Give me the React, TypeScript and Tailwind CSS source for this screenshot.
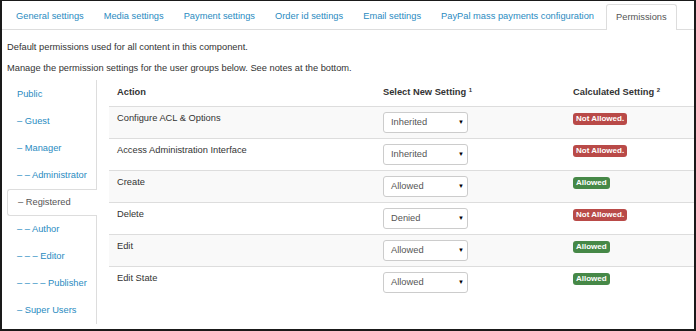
import React from 'react';

type Setting = 'Inherited' | 'Allowed' | 'Denied';

type Row = {
  action: string;
  setting: Setting;
  allowed: boolean;
};

const tabs = [
  'General settings',
  'Media settings',
  'Payment settings',
  'Order id settings',
  'Email settings',
  'PayPal mass payments configuration',
  'Permissions'
];

const groups = [
  'Public',
  '– Guest',
  '– Manager',
  '– – Administrator',
  '– Registered',
  '– – Author',
  '– – – Editor',
  '– – – – Publisher',
  '– Super Users'
];

const rows: Row[] = [
  { action: 'Configure ACL & Options', setting: 'Inherited', allowed: false },
  { action: 'Access Administration Interface', setting: 'Inherited', allowed: false },
  { action: 'Create', setting: 'Allowed', allowed: true },
  { action: 'Delete', setting: 'Denied', allowed: false },
  { action: 'Edit', setting: 'Allowed', allowed: true },
  { action: 'Edit State', setting: 'Allowed', allowed: true }
];

const SelectBox = ({ value }: { value: Setting }) => (
  <div className="flex h-[21px] w-[85px] items-center justify-between rounded-[3px] border border-[#cccccc] bg-white pl-[7px] pr-[3px] text-[9.3px] text-[#555555]">
    <span>{value}</span>
    <span className="text-[6px] text-black">▼</span>
  </div>
);

const Badge = ({ allowed }: { allowed: boolean }) => (
  <span
    className={`inline-block rounded-[3px] px-[3px] py-[1px] text-[8px] font-bold leading-[10px] text-white ${
      allowed ? 'bg-[#468847]' : 'bg-[#b94a48]'
    }`}
  >
    {allowed ? 'Allowed' : 'Not Allowed.'}
  </span>
);

const App = () => {
  const activeTab = 'Permissions';
  const activeGroup = '– Registered';

  return (
    <div
      className="h-[331px] w-[696px] overflow-hidden border-b-2 border-l-2 border-r-2 border-t border-[#1a1a1a] bg-white text-[9.3px] text-[#333333]"
      style={{ fontFamily: '"Liberation Sans", Arial, sans-serif' }}
    >
      {/* Tabs */}
      <div className="mt-[3px] flex h-[26px] border-b border-[#dddddd] pl-[4px]">
        {tabs.map(tab => (
          <div
            key={tab}
            className={`-mb-px flex items-center ${
              tab === activeTab
                ? 'ml-[2px] rounded-t-[3px] border border-b-0 border-[#dddddd] bg-white px-[9px] text-[#555555]'
                : 'px-[10px] text-[#2a8bbf]'
            }`}
          >
            {tab}
          </div>
        ))}
      </div>

      <p className="mt-[11px] pl-[5px] leading-[12px]">Default permissions used for all content in this component.</p>
      <p className="mt-[9px] pl-[5px] leading-[12px]">
        Manage the permission settings for the user groups below. See notes at the bottom.
      </p>

      <div className="mt-[6px] flex">
        {/* Group list */}
        <div className="ml-[5px] w-[90px] shrink-0 border-r border-[#dddddd] pt-px">
          {groups.map(group => (
            <div
              key={group}
              className={`flex h-[27px] items-center pl-[10px] ${
                group === activeGroup
                  ? '-mr-px rounded-l-[3px] border border-r-0 border-[#dddddd] bg-white text-[#555555]'
                  : 'text-[#2a8bbf]'
              }`}
            >
              {group}
            </div>
          ))}
        </div>

        {/* Permission table */}
        <div className="ml-[12px] flex-1">
          <div className="flex h-[26px] items-center font-bold">
            <div className="w-[266px] pl-[8px]">Action</div>
            <div className="w-[190px] pl-[8px]">
              Select New Setting <sup className="text-[6px]">1</sup>
            </div>
            <div className="pl-[8px]">
              Calculated Setting <sup className="text-[6px]">2</sup>
            </div>
          </div>
          {rows.map((row, i) => (
            <div
              key={row.action}
              className={`flex h-[32px] border-t border-[#dddddd] ${i % 2 === 0 ? 'bg-[#f9f9f9]' : 'bg-white'}`}
            >
              <div className="w-[266px] pl-[8px] pt-[5px] leading-[12px]">{row.action}</div>
              <div className="w-[190px] pl-[8px] pt-[5px]">
                <SelectBox value={row.setting} />
              </div>
              <div className="pl-[8px] pt-[5px]">
                <Badge allowed={row.allowed} />
              </div>
            </div>
          ))}
        </div>
      </div>
    </div>
  );
};

export default App;
